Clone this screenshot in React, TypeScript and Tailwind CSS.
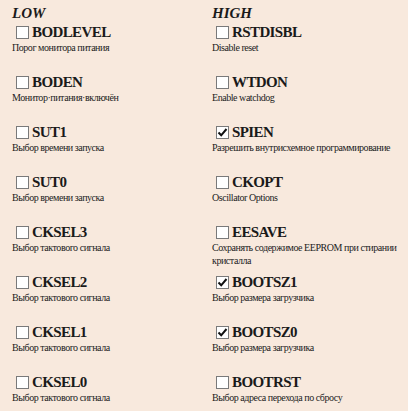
import React from 'react'

type Fuse = { name: string; desc: string; checked?: boolean }

const low: Fuse[] = [
  { name: 'BODLEVEL', desc: 'Порог монитора питания' },
  { name: 'BODEN', desc: 'Монитор·питания·включён' },
  { name: 'SUT1', desc: 'Выбор времени запуска' },
  { name: 'SUT0', desc: 'Выбор времени запуска' },
  { name: 'CKSEL3', desc: 'Выбор тактового сигнала' },
  { name: 'CKSEL2', desc: 'Выбор тактового сигнала' },
  { name: 'CKSEL1', desc: 'Выбор тактового сигнала' },
  { name: 'CKSEL0', desc: 'Выбор тактового сигнала' },
]

const high: Fuse[] = [
  { name: 'RSTDISBL', desc: 'Disable reset' },
  { name: 'WTDON', desc: 'Enable watchdog' },
  { name: 'SPIEN', desc: 'Разрешить внутрисхемное программирование', checked: true },
  { name: 'CKOPT', desc: 'Oscillator Options' },
  { name: 'EESAVE', desc: 'Сохранять содержимое EEPROM при стирании кристалла' },
  { name: 'BOOTSZ1', desc: 'Выбор размера загрузчика', checked: true },
  { name: 'BOOTSZ0', desc: 'Выбор размера загрузчика', checked: true },
  { name: 'BOOTRST', desc: 'Выбор адреса перехода по сбросу' },
]

function Box({ checked }: { checked?: boolean }) {
  return (
    <span className="w-[13px] h-[13px] border border-[#7a7a7a] bg-white flex items-center justify-center shrink-0">
      {checked && (
        <svg width="11" height="11" viewBox="0 0 11 11">
          <path d="M1.5 5.5 L4.2 8.3 L9.5 2" stroke="#111" strokeWidth="2" fill="none" />
        </svg>
      )}
    </span>
  )
}

function Cell({ f }: { f: Fuse }) {
  return (
    <div className="h-[50px]">
      <div className="flex items-center gap-[3px] pl-[4px] h-[18px]">
        <Box checked={f.checked} />
        <span className="text-[15px] font-bold tracking-[-0.6px] text-[#1a1a1a] leading-[18px]">{f.name}</span>
      </div>
      <div className="text-[10px] leading-[13px] tracking-[-0.45px] text-[#222] w-[186px]">{f.desc}</div>
    </div>
  )
}

export default function App() {
  return (
    <div className="w-[408px] h-[411px] bg-[#f8e9dd] pl-[12px] pt-[5px]" style={{ fontFamily: '"Liberation Serif", serif' }}>
      <div className="grid grid-cols-[200px_196px]">
        <div className="h-[18px] text-[15px] font-bold italic leading-[16px] text-[#1a1a1a]">LOW</div>
        <div className="h-[18px] text-[15px] font-bold italic leading-[16px] text-[#1a1a1a]">HIGH</div>
        {low.map((f, i) => (
          <React.Fragment key={f.name}>
            <Cell f={f} />
            <Cell f={high[i]} />
          </React.Fragment>
        ))}
      </div>
    </div>
  )
}
